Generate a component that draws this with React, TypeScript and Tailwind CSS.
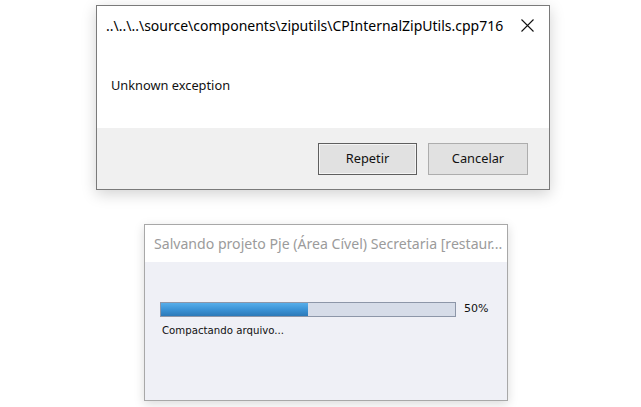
export default function App() {
  return (
    <main className="min-h-[407px] w-[641px] bg-white overflow-hidden" style={{ fontFamily: '"Noto Sans", "Open Sans", sans-serif' }}>
      <div className="flex flex-col items-start">
        {/* error dialog */}
        <div className="ml-[96px] mt-[5px] w-[454px] border border-[#7a7a7a] bg-white shadow-[0_4px_14px_rgba(0,0,0,0.18)]">
          <div className="flex h-[38px] items-center justify-between pl-[9px] pr-[15px]">
            <span className="text-[14px] text-black">
              ..\..\..\source\components\ziputils\CPInternalZipUtils.cpp716
            </span>
            <svg width="13" height="13" viewBox="0 0 13 13">
              <path d="M0.5 0.5 L12.5 12.5 M12.5 0.5 L0.5 12.5" stroke="#111" strokeWidth="1.1" fill="none" />
            </svg>
          </div>
          <div className="flex h-[84px] items-center pl-[14px]">
            <span className="text-[12.8px] text-[#111]">Unknown exception</span>
          </div>
          <div className="flex h-[61px] items-start justify-end gap-[11px] bg-[#f0f0f0] pt-[15px] pr-[21px]">
            <button className="h-[32px] w-[99px] border border-[#5f5f5f] bg-[#e1e1e1] text-[12.8px] text-[#111] shadow-[inset_0_0_0_1px_#f4f4f4]">
              Repetir
            </button>
            <button className="h-[32px] w-[100px] border border-[#adadad] bg-[#e1e1e1] text-[12.8px] text-[#111]">
              Cancelar
            </button>
          </div>
        </div>

        {/* progress dialog */}
        <div className="ml-[144px] mt-[34px] w-[364px] h-[177px] border border-[#a8a8a8] bg-[#eff0f6] shadow-[0_3px_10px_rgba(0,0,0,0.15)] flex flex-col">
          <div className="flex h-[37px] items-center bg-white pl-[9px] overflow-hidden whitespace-nowrap">
            <span className="text-[14.1px] text-[#9b9b9b]">Salvando projeto Pje (Área Cível) Secretaria [restaur...</span>
          </div>
          <div className="pl-[15px] pt-[39px]">
            <div className="flex items-center">
              <div className="h-[15px] w-[296px] border border-[#8d96a8] bg-[#d6dce8]">
                <div className="h-full w-1/2 bg-gradient-to-b from-[#56aeea] via-[#3b93d6] to-[#2c79b8]" />
              </div>
              <span className="ml-[8px] text-[11px] text-[#111]" style={{ fontFamily: '"DejaVu Sans", sans-serif' }}>50%</span>
            </div>
            <div className="mt-[5px] pl-[2px] text-[10.2px] text-[#111]" style={{ fontFamily: '"DejaVu Sans", sans-serif' }}>
              Compactando arquivo...
            </div>
          </div>
        </div>
      </div>
    </main>
  );
}
